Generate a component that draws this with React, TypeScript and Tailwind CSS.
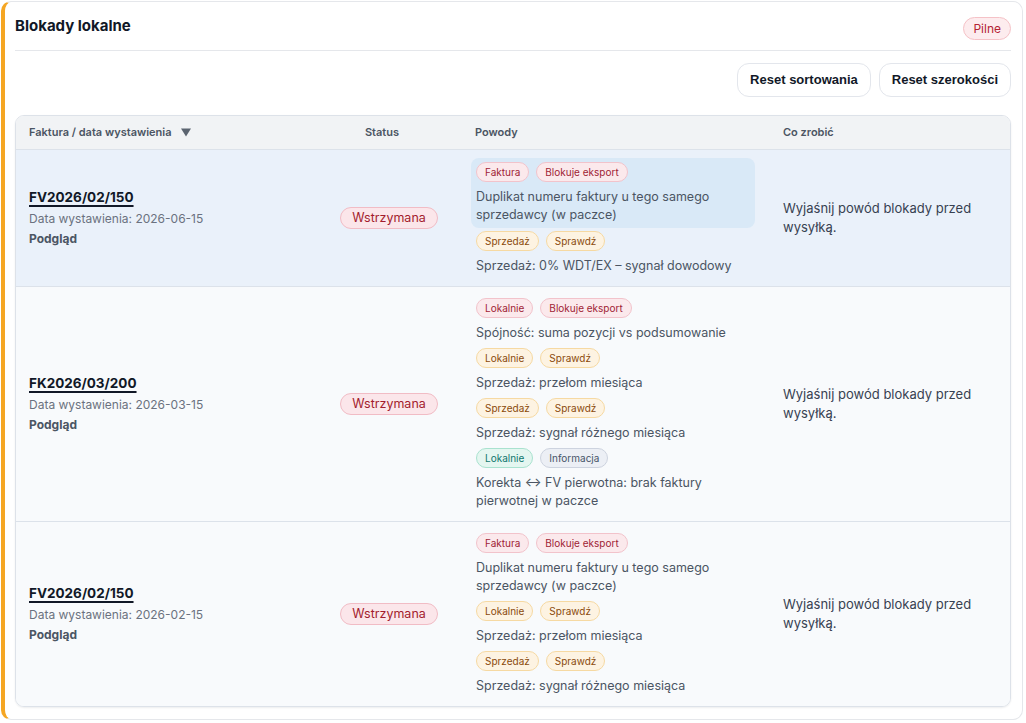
import React from 'react'

type Tone = 'red' | 'amber' | 'teal' | 'slate'

type Reason = {
  tags: { label: string; tone: Tone }[]
  text: string
  active?: boolean
}

type Row = {
  number: string
  date: string
  selected?: boolean
  reasons: Reason[]
}

const TONES: Record<Tone, string> = {
  red: 'bg-[#fbe9ec] border-[#f2c3cb] text-[#9f1d35]',
  amber: 'bg-[#fdf3e2] border-[#f6d9a2] text-[#8a4a0c]',
  teal: 'bg-[#e4f6f0] border-[#a9e2cf] text-[#0f766e]',
  slate: 'bg-[#eceff5] border-[#cdd3df] text-[#475569]',
}

const ROWS: Row[] = [
  {
    number: 'FV2026/02/150',
    date: '2026-06-15',
    selected: true,
    reasons: [
      {
        tags: [
          { label: 'Faktura', tone: 'red' },
          { label: 'Blokuje eksport', tone: 'red' },
        ],
        text: 'Duplikat numeru faktury u tego samego sprzedawcy (w paczce)',
        active: true,
      },
      {
        tags: [
          { label: 'Sprzedaż', tone: 'amber' },
          { label: 'Sprawdź', tone: 'amber' },
        ],
        text: 'Sprzedaż: 0% WDT/EX – sygnał dowodowy',
      },
    ],
  },
  {
    number: 'FK2026/03/200',
    date: '2026-03-15',
    reasons: [
      {
        tags: [
          { label: 'Lokalnie', tone: 'red' },
          { label: 'Blokuje eksport', tone: 'red' },
        ],
        text: 'Spójność: suma pozycji vs podsumowanie',
      },
      {
        tags: [
          { label: 'Lokalnie', tone: 'amber' },
          { label: 'Sprawdź', tone: 'amber' },
        ],
        text: 'Sprzedaż: przełom miesiąca',
      },
      {
        tags: [
          { label: 'Sprzedaż', tone: 'amber' },
          { label: 'Sprawdź', tone: 'amber' },
        ],
        text: 'Sprzedaż: sygnał różnego miesiąca',
      },
      {
        tags: [
          { label: 'Lokalnie', tone: 'teal' },
          { label: 'Informacja', tone: 'slate' },
        ],
        text: 'Korekta ↔ FV pierwotna: brak faktury pierwotnej w paczce',
      },
    ],
  },
  {
    number: 'FV2026/02/150',
    date: '2026-02-15',
    reasons: [
      {
        tags: [
          { label: 'Faktura', tone: 'red' },
          { label: 'Blokuje eksport', tone: 'red' },
        ],
        text: 'Duplikat numeru faktury u tego samego sprzedawcy (w paczce)',
      },
      {
        tags: [
          { label: 'Lokalnie', tone: 'amber' },
          { label: 'Sprawdź', tone: 'amber' },
        ],
        text: 'Sprzedaż: przełom miesiąca',
      },
      {
        tags: [
          { label: 'Sprzedaż', tone: 'amber' },
          { label: 'Sprawdź', tone: 'amber' },
        ],
        text: 'Sprzedaż: sygnał różnego miesiąca',
      },
    ],
  },
]

const GRID = 'grid grid-cols-[287px_158px_308px_1fr]'

function Tag({ label, tone }: { label: string; tone: Tone }) {
  return (
    <span
      className={`inline-flex h-[20px] items-center rounded-full border px-[8px] text-[10px] leading-none ${TONES[tone]}`}
    >
      {label}
    </span>
  )
}

function ReasonBlock({ reason }: { reason: Reason }) {
  return (
    <div className={`rounded-lg px-[5px] ${reason.active ? 'bg-[#d9e9f7] py-[4px]' : 'py-[3px]'}`}>
      <div className="flex gap-[7px]">
        {reason.tags.map((t, i) => (
          <Tag key={i} label={t.label} tone={t.tone} />
        ))}
      </div>
      <p className="mt-1.5 text-[12.5px] leading-[18px] text-[#4b5563]">{reason.text}</p>
    </div>
  )
}

function TableRow({ row }: { row: Row }) {
  return (
    <div className={`${GRID} border-t border-[#dce2ea] ${row.selected ? 'bg-[#eaf1fa]' : 'bg-[#f8fafc]'}`}>
      <div className="flex flex-col justify-center pl-[13px]">
        <span className="w-fit text-[13.5px] font-bold leading-[20px] text-[#111827] underline decoration-[1.5px] underline-offset-[3px]">
          {row.number}
        </span>
        <span className="mt-[2px] text-[12px] leading-[20px] text-[#6b7280]">Data wystawienia: {row.date}</span>
        <span className="text-[12px] font-bold leading-[20px] text-[#4b5563]">Podgląd</span>
      </div>
      <div className="flex items-center justify-center pl-[14px]">
        <span className="inline-flex h-[22px] items-center rounded-full border border-[#f1bcc5] bg-[#fbe6ea] px-[11px] text-[12.5px] text-[#a31d2e]">
          Wstrzymana
        </span>
      </div>
      <div className="py-2 pl-[10px] pr-[14px]">
        {row.reasons.map((r, i) => (
          <ReasonBlock key={i} reason={r} />
        ))}
      </div>
      <div className="flex items-center pl-[14px] pr-[14px]">
        <p className="text-[13px] leading-[19px] text-[#374151]">Wyjaśnij powód blokady przed wysyłką.</p>
      </div>
    </div>
  )
}

export default function App() {
  return (
    <div className="bg-white p-[1px] pr-[3px] font-['Inter','Noto_Sans',sans-serif]">
      <div className="rounded-[10px] border border-l-4 border-[#e5e7eb] border-l-[#f5a623] bg-white pb-3 pl-[10px] pr-[11px]">
        <div className="flex items-start justify-between border-b border-[#e5e7eb] pb-[10px] pt-[14px]">
          <h2 className="text-[15px] font-bold leading-[20px] text-[#111827]">Blokady lokalne</h2>
          <span className="mt-[1px] inline-flex h-[23px] items-center rounded-full border border-[#f5c2c7] bg-[#fdecee] px-[9px] text-[12px] text-[#b42334]">
            Pilne
          </span>
        </div>

        <div className="mt-3 flex justify-end gap-2 font-['Liberation_Sans',Arial,sans-serif]">
          <button className="h-[34px] rounded-[12px] border border-[#e3e6ec] bg-white px-3 text-[13px] font-bold text-[#111827]">
            Reset sortowania
          </button>
          <button className="h-[34px] rounded-[12px] border border-[#e3e6ec] bg-white px-3 text-[13px] font-bold text-[#111827]">
            Reset szerokości
          </button>
        </div>

        <div className="mt-[18px] overflow-hidden rounded-[9px] border border-[#dde2e9] shadow-[0_1px_2px_rgba(15,23,42,0.08)]">
          <div className={`${GRID} h-[33px] items-center bg-[#f1f3f5] text-[11px] font-semibold text-[#4b5563]`}>
            <div className="flex items-center gap-[9px] pl-[13px]">
              <span>Faktura / data wystawienia</span>
              <svg width="10" height="9" viewBox="0 0 10 9" className="fill-[#5b6470]">
                <path d="M0 0.5h10L5 8.5z" />
              </svg>
            </div>
            <div className="text-center">Status</div>
            <div className="pl-[14px]">Powody</div>
            <div className="pl-[14px]">Co zrobić</div>
          </div>
          {ROWS.map((row, i) => (
            <TableRow key={i} row={row} />
          ))}
        </div>
      </div>
    </div>
  )
}
